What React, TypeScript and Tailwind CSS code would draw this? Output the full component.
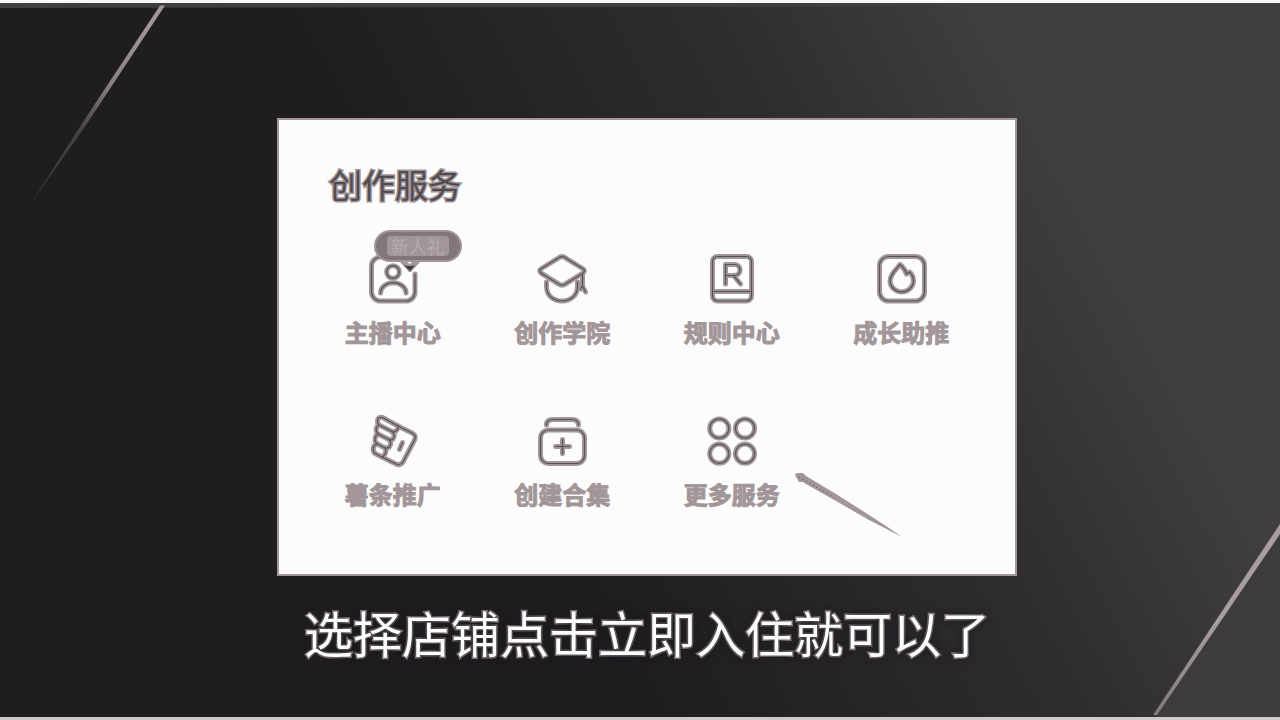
import type { ReactNode } from "react";

function Glyph({ children }: { children: ReactNode }) {
  return (
    <svg viewBox="0 0 52 52" className="size-[52px] overflow-visible" fill="none" strokeLinecap="round" strokeLinejoin="round" aria-hidden="true">
      <g stroke="#a29699" strokeWidth="5">{children}</g>
      <g stroke="#575257" strokeWidth="1.2">{children}</g>
    </svg>
  );
}

type Service = { name: string; icon: ReactNode; badge?: string; pointer?: boolean };

const services: Service[] = [
  {
    name: "主播中心",
    badge: "新人礼",
    icon: (
      <>
        <path d="M48 21V39a9 9 0 0 1-9 9H13.500a9 9 0 0 1-9-9V13a9 9 0 0 1 9-9H24" />
        <circle cx="26" cy="19" r="6.300" />
        <path d="M13.500 40a12.800 10.300 0 0 1 25.600 0" />
      </>
    ),
  },
  {
    name: "创作学院",
    icon: (
      <>
        <path d="M28.500 4.300 46.500 15.500Q50.500 17.700 46.500 20.400L28.500 31.500q-2.500 1.400-5 0L5.500 20.400Q2 17.700 5.500 15.500L23.500 4.300q2.500-1.400 5 0Z" />
        <path d="M10.500 29v4.500C10.500 43 18 48 26 48s15.500-5 15.500-14.500V29" />
        <path d="M46.500 21v12l3 6M46.500 33l-2 3" />
      </>
    ),
  },
  {
    name: "规则中心",
    icon: (
      <>
        <rect x="6.500" y="3.500" width="39" height="44.500" rx="5" />
        <path d="M6.500 38.500h39" />
        <path d="M19.500 31V11.500H28.500a5.500 5.500 0 0 1 0 11H19.500M27.500 22.500 34.500 31" />
      </>
    ),
  },
  {
    name: "成长助推",
    icon: (
      <>
        <rect x="4.500" y="3.500" width="45" height="44.500" rx="9" />
        <path d="M25 11.500C20 17.500 15 22 15 28.500a11.800 11.500 0 0 0 23.500 0C38.500 25 37 21 34.500 19l-3 2C30.500 17.500 28 14 25 11.500Z" />
      </>
    ),
  },
  {
    name: "薯条推广",
    icon: (
      <>
        <path d="M31 11 45 18Q50 20.500 47.500 25L36 47Q33.500 51 29 49L15 42" />
        <path d="M31 11 15.500 2.500C10 1 9 8 13 10.500L25 16.500C29 18 31.500 14 31 11" />
        <path d="M12 10.500C8.500 11 8 17.500 12 19.500L22 24.500C27 26 29 20 25 16.500" />
        <path d="M11.500 19.500C7 20.500 7 27 10.500 29L18 33C23 34 25.500 28 22 24.500" />
        <path d="M10.500 29C5 30 5 37 9 39L15 42C18.500 40 20 36 18 33" />
        <path d="M35.500 27.500 32.500 34.500" />
      </>
    ),
  },
  {
    name: "创建合集",
    icon: (
      <>
        <rect x="4.500" y="15" width="44" height="33.500" rx="8" />
        <path d="M10.500 10C10.500 6 13 4.500 17 4.500H36C40 4.500 42.500 6 42.500 10" />
        <path d="M26.500 24.500v14M19.500 31.500h14" />
      </>
    ),
  },
  {
    name: "更多服务",
    pointer: true,
    icon: (
      <>
        <circle cx="13.300" cy="13.500" r="9.600" />
        <circle cx="39" cy="13.500" r="9.600" />
        <circle cx="13.300" cy="38.700" r="9.600" />
        <circle cx="39" cy="38.700" r="9.600" />
      </>
    ),
  },
];

function Badge({ text }: { text: string }) {
  return (
    <span className="absolute -top-[23px] left-[7px] flex h-8 w-[88px] items-center justify-center rounded-full border-2 border-[#a29699] bg-[#81777b]">
      <span className="rounded-sm bg-[#a29699] px-1 text-[18px] leading-5 text-[#b5abae]">{text}</span>
      <svg viewBox="0 0 22 12" className="absolute left-[23px] top-[29px] h-3 w-[22px]" aria-hidden="true">
        <path d="M0 0H22L12 11H10Z" fill="#a29699" />
        <path d="M5 4l3 1h5l3-1-5 6Z" fill="#403e41" />
        <path d="M8 1h5l-2 2Z" fill="#fcfcfc" />
      </svg>
    </span>
  );
}

function ServiceItem({ name, icon, badge, pointer }: Service) {
  return (
    <li className="relative flex justify-center">
      <button type="button" className="flex flex-col items-center gap-[9px]">
        <span className="relative">
          <Glyph>{icon}</Glyph>
          {badge && <Badge text={badge} />}
        </span>
        <span className="whitespace-nowrap text-[24px] font-bold leading-9 text-[#a29699] [-webkit-text-stroke:1px_#a29699]">{name}</span>
      </button>
      {pointer && (
        <svg viewBox="0 0 110 66" className="absolute left-[147px] top-[57px] h-[66px] w-[110px]" fill="none" aria-hidden="true">
          <path d="M1 3Q1 1 4 1H9L12 4 42 22 75 43 95 56 108 65 75 48 42 29 12 12 9 10H5Z" fill="#a29699" />
          <path d="M5 5 38 24" stroke="#5a5458" strokeWidth="1.200" strokeDasharray="1 3" />
        </svg>
      )}
    </li>
  );
}

function Backdrop() {
  return (
    <svg viewBox="0 3 1280 714" preserveAspectRatio="none" className="pointer-events-none absolute inset-0 size-full" aria-hidden="true">
      <defs>
        <linearGradient id="streak" x1="1" y1="0" x2="0" y2="1">
          <stop offset="0.100" stopColor="#a29699" />
          <stop offset="0.400" stopColor="#8a8084" />
          <stop offset="0.620" stopColor="#454246" />
          <stop offset="1" stopColor="#353236" />
        </linearGradient>
        <linearGradient id="corner" x1="1" y1="0" x2="0" y2="1">
          <stop offset="0.500" stopColor="#a89da0" />
          <stop offset="1" stopColor="#82787c" />
        </linearGradient>
      </defs>
      <path d="M0 3H1280V6L0 8Z" fill="#403e41" />
      <path d="M1280 526V717H1154Z" fill="#3d3b3e" />
      <path d="M160 5.500H165L82 131 30 205 79 128Z" fill="url(#streak)" />
      <path d="M1280 524V534L1157 715H1153Z" fill="url(#corner)" />
    </svg>
  );
}

export default function App() {
  return (
    <main className="relative flex min-h-screen flex-col items-center overflow-hidden border-t-[3px] border-b-[3px] border-t-[#f8f7f8] border-b-[#d0c9cb] bg-[linear-gradient(62deg,#1f1d20_40%,#2e2c2f_65%,#403e41_82%)] pt-[115px] pl-[14px] font-['Noto_Sans_CJK_SC',sans-serif]">
      <Backdrop />
      <section className="relative w-full max-w-[740px] border-2 border-[#a29699] bg-[#fcfcfc] px-[29px] pt-10 pb-[62px]">
        <h1 className="px-[21px] text-[33px] font-normal leading-[48px] text-[#504b50] [paint-order:stroke_fill] [-webkit-text-stroke:3px_#a29699]">创作服务</h1>
        <ul className="mt-[45px] grid grid-cols-4 gap-y-[65px]">
          {services.map((service) => (
            <ServiceItem key={service.name} {...service} />
          ))}
        </ul>
      </section>
      <p className="relative mt-6 whitespace-nowrap text-[49px] font-normal leading-[64px] text-[#fcfcfc] [paint-order:stroke_fill] [-webkit-text-stroke:3px_#a29699] [text-shadow:0_0_6px_#1f1d20,0_0_8px_#1f1d20]">选择店铺点击立即入住就可以了</p>
    </main>
  );
}
